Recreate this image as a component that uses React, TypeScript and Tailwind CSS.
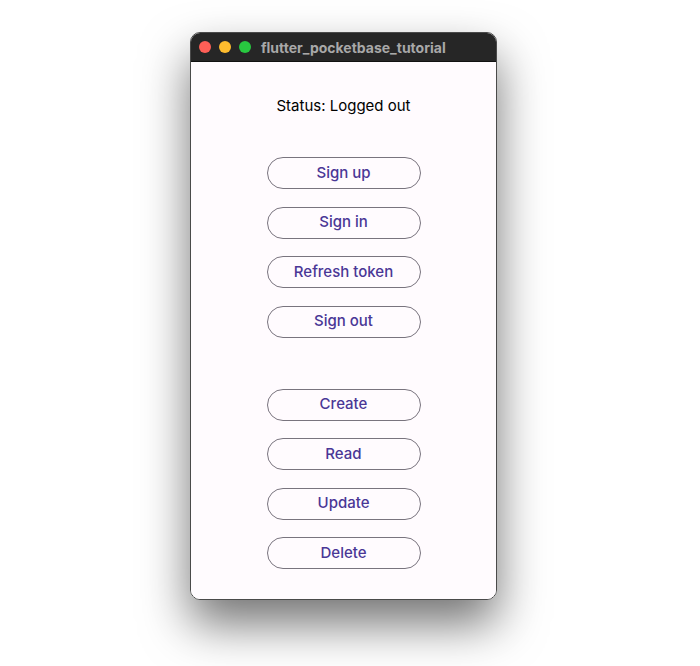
const authActions = ["Sign up", "Sign in", "Refresh token", "Sign out"]
const crudActions = ["Create", "Read", "Update", "Delete"]

function OutlineButton({ label }: { label: string }) {
  return (
    <button className="flex h-[32px] w-[154px] items-center justify-center rounded-full border border-[#79747e] text-[15px] font-medium text-[#4a3796]">
      {label}
    </button>
  )
}

export default function App() {
  return (
    <div className="h-[666px] w-[700px] bg-white pl-[190px] pt-[32px] font-['Inter',sans-serif]">
      <div className="flex h-[568px] w-[307px] flex-col overflow-hidden rounded-[10px] border border-[#4a4a4a] shadow-[0_24px_48px_rgba(0,0,0,0.55)]">
        {/* Title bar */}
        <div className="flex h-[28px] shrink-0 items-center bg-[#262626] pl-[8px]">
          <div className="flex gap-[8px]">
            <span className="h-[12px] w-[12px] rounded-full bg-[#fe5f57]" />
            <span className="h-[12px] w-[12px] rounded-full bg-[#febc2e]" />
            <span className="h-[12px] w-[12px] rounded-full bg-[#28c840]" />
          </div>
          <span className="ml-[10px] text-[14px] font-bold text-[#a8a8a8]">
            flutter_pocketbase_tutorial
          </span>
        </div>

        {/* Content */}
        <div className="flex flex-1 flex-col items-center border-t border-[#111] bg-[#fffbfe] pt-[34px]">
          <p className="text-[15px] leading-[20px] text-black">Status: Logged out</p>
          <div className="mt-[41px] flex flex-col gap-[17.5px]">
            {authActions.map((a) => (
              <OutlineButton key={a} label={a} />
            ))}
          </div>
          <div className="mt-[51px] flex flex-col gap-[17.5px]">
            {crudActions.map((a) => (
              <OutlineButton key={a} label={a} />
            ))}
          </div>
        </div>
      </div>
    </div>
  )
}
